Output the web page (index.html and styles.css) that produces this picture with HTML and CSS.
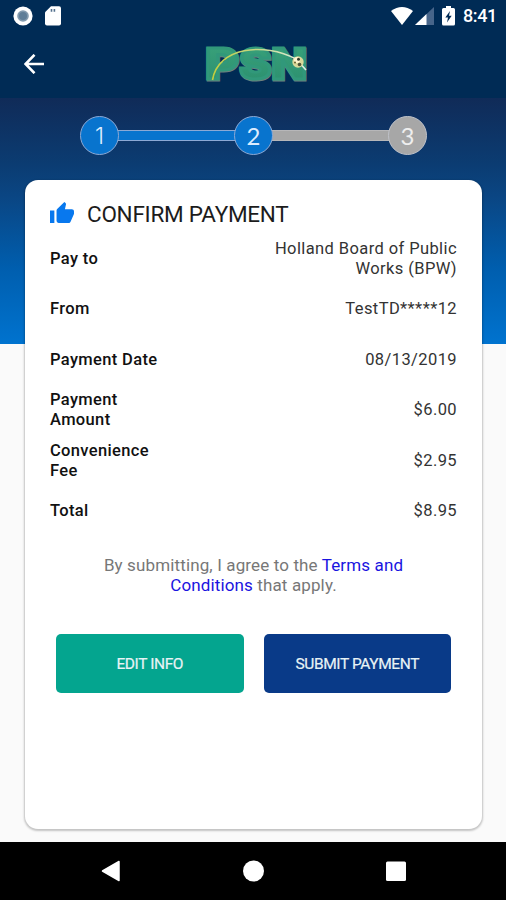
FILE: index.html
```html
<!DOCTYPE html>
<html lang="en">
<head>
<meta charset="utf-8">
<title>Confirm Payment</title>
<link rel="stylesheet" href="styles.css">
</head>
<body>
<div class="screen">
  <header class="top">
    <div class="status">
      <div class="status-left">
        <svg width="20" height="20" viewBox="0 0 20 20"><circle cx="10" cy="10" r="9.6" fill="#fff"/><circle cx="10" cy="10" r="5.8" fill="#829aae"/><circle cx="10" cy="10" r="4" fill="#5f7e98"/></svg>
        <svg width="16" height="20" viewBox="0 0 16 20"><path d="M6 .3H14Q16 .3 16 2.3V17.5Q16 19.5 14 19.5H2Q0 19.5 0 17.5V6.2Z" fill="#fff"/><path d="M5.700 3h1.600v2.800H5.700zM8.600 3h1.600v2.800H8.600z" fill="#53708d"/></svg>
      </div>
      <div class="status-right">
        <svg class="wifi" width="22" height="18" viewBox="0 0 22 18"><path d="M0 4Q11-4 22 4L11 18Z" fill="#fff"/></svg>
        <svg class="signal" width="19" height="18" viewBox="0 0 19 18"><path d="M0 18L19 0V18Z" fill="#47658a"/><path d="M0 18L11.500 7V18Z" fill="#fff"/></svg>
        <svg class="battery" width="13" height="20" viewBox="0 0 13 20"><path d="M4 0H9V2H11.500Q13 2 13 3.500V18Q13 19.500 11.500 19.500H1.500Q0 19.500 0 18V3.500Q0 2 1.500 2H4Z" fill="#fff"/><path d="M8 5L3.300 11.500H6L5 16.500L9.700 9.700H7Z" fill="#002b55"/></svg>
        <span class="clock">8:41</span>
      </div>
    </div>
    <div class="toolbar">
      <svg class="back" width="20" height="20" viewBox="0 0 20 20"><path d="M20 10H2M10.500 .8L1.500 10L10.500 19.200" fill="none" stroke="#fff" stroke-width="2.600"/></svg>
      <svg class="logo" width="104" height="40" viewBox="0 0 104 40">
        <defs>
          <linearGradient id="green" x1="0" y1="0" x2="0" y2="1"><stop offset="0" stop-color="#3ba47c"/><stop offset="1" stop-color="#2a8d6d"/></linearGradient>
          <linearGradient id="trail"><stop offset="0" stop-color="#c3cd3d"/><stop offset=".45" stop-color="#c5d884"/><stop offset="1" stop-color="#dfeee8"/></linearGradient>
        </defs>
        <g class="logo-text logo-edge">
          <text x="2" y="35.900" textLength="33" lengthAdjust="spacingAndGlyphs">P</text>
          <text x="35.800" y="35.900" textLength="32" lengthAdjust="spacingAndGlyphs">S</text>
          <text x="68" y="35.900" textLength="35" lengthAdjust="spacingAndGlyphs">N</text>
        </g>
        <g class="logo-text">
          <text x="1.500" y="35.300" textLength="33" lengthAdjust="spacingAndGlyphs">P</text>
          <text x="35.300" y="35.300" textLength="32" lengthAdjust="spacingAndGlyphs">S</text>
          <text x="67.500" y="35.300" textLength="35" lengthAdjust="spacingAndGlyphs">N</text>
        </g>
        <path d="M8.500 36C14 3 60-2 92 15L102 26" fill="none" stroke="url(#trail)" stroke-width="1.600"/>
        <circle cx="94" cy="18" r="5.700" fill="#d9d99a"/><circle cx="93" cy="16" r="3" fill="#fff5cf"/><circle cx="94.500" cy="15.300" r="1.500" fill="#333b2d"/><circle cx="95.500" cy="20.500" r="1.800" fill="#4e533a"/><circle cx="91" cy="18.500" r="1" fill="#695f2d"/>
      </svg>
    </div>
  </header>
  <main class="content">
    <div class="steps">
      <div class="step step-one">1</div>
      <div class="bar"></div>
      <div class="step">2</div>
      <div class="bar bar-off"></div>
      <div class="step step-off">3</div>
    </div>
    <section class="card">
      <h1 class="title">
        <svg width="24" height="22" viewBox="1 1 22 21" preserveAspectRatio="none"><path fill="#0878ee" d="M1 21h4V9H1v12zm22-11c0-1.100-.9-2-2-2h-6.310l.95-4.570.03-.32c0-.41-.17-.79-.44-1.060L14.170 1 7.590 7.590C7.220 7.950 7 8.450 7 9v10c0 1.100.9 2 2 2h9c.83 0 1.540-.5 1.840-1.220l3.020-7.050c.09-.23.14-.47.14-.73v-2z"/></svg>
        <span class="title-text">CONFIRM PAYMENT</span>
      </h1>
      <dl class="details">
        <div class="row"><dt>Pay to</dt><dd>Holland Board of Public<br>Works (BPW)</dd></div>
        <div class="row"><dt>From</dt><dd>TestTD*****12</dd></div>
        <div class="row"><dt>Payment Date</dt><dd>08/13/2019</dd></div>
        <div class="row"><dt>Payment<br>Amount</dt><dd>$6.00</dd></div>
        <div class="row"><dt>Convenience<br>Fee</dt><dd>$2.95</dd></div>
        <div class="row"><dt>Total</dt><dd>$8.95</dd></div>
      </dl>
      <p class="terms">By submitting, I agree to the <a>Terms and<br>Conditions</a> that apply.</p>
      <div class="actions">
        <button class="btn btn-edit">EDIT INFO</button>
        <button class="btn btn-submit">SUBMIT PAYMENT</button>
      </div>
    </section>
  </main>
  <nav class="navbar">
    <svg width="20" height="22" viewBox="0 0 20 22"><path d="M1.500 11L18 1.500V20.500Z" fill="#fff" stroke="#fff" stroke-width="1.500" stroke-linejoin="round"/></svg>
    <svg width="22" height="22" viewBox="0 0 22 22"><circle cx="10.500" cy="11" r="10.500" fill="#fff"/></svg>
    <svg width="20" height="22" viewBox="0 0 20 22"><rect y="1.500" width="20" height="19.500" rx="1.500" fill="#fff"/></svg>
  </nav>
</div>
</body>
</html>
```
FILE: styles.css
```css
* { box-sizing: border-box; }
body { margin: 0; font-family: Roboto, "Liberation Sans", sans-serif; color: #1c1c1c; }
svg { display: block; flex: none; }
.screen { width: 506px; height: 900px; display: flex; flex-direction: column; overflow: hidden; background: #fafafa; }
.top { height: 98px; background: #002b55; }
.status { height: 31px; padding: 0 9px 0 13px; display: flex; justify-content: space-between; align-items: center; }
.status-left { display: flex; gap: 12px; }
.status-right { display: flex; align-items: center; }
.wifi { margin-right: 1px; }
.signal { margin-left: 1px; }
.battery { margin-left: 8px; }
.clock { margin-left: 8px; color: #fff; font-size: 18px; font-weight: 500; line-height: 20px; width: 34px; white-space: nowrap; letter-spacing: -0.4px; }
.toolbar { height: 66px; padding: 0 24px; display: flex; align-items: center; }
.logo { margin-left: 160px; overflow: visible; }
.logo-text { font-family: Inter, sans-serif; font-size: 43px; font-weight: 900; fill: url(#green); stroke: #31987a; stroke-width: 3px; }
.logo-edge { fill: #6c817f; stroke: #6c817f; }
.content { height: 744px; padding: 18px 24px 12px 25px; background: linear-gradient(#102b58 0, #0b3c72 66px, #0a4684 100px, #005eae 170px, #0073cf 246px, #fafafa 246px); }
.steps { height: 39px; margin: 0 55px; display: flex; align-items: center; }
.step { width: 39px; height: 39px; flex: none; border: 1px solid #8ca9d5; border-radius: 50%; background: #0874ce; color: #dcecff; font: 400 24px/38px Lato, sans-serif; text-align: center; z-index: 1; }
.step-one { font-family: Inter, sans-serif; font-size: 23px; font-weight: 300; }
.step-off { background: #a7a7a7; border-color: #bfc2c9; color: #eee; }
.bar { flex: 1; height: 11px; margin: 0 -2px; background: #0874ce; border: solid #8ca9d5; border-width: 1.5px 0; }
.bar-off { background: #a7a7a7; border-color: #b7b7b9; }
.card { height: 649px; margin-top: 25px; padding: 20px 25px 0; background: #fff; border-radius: 13px; box-shadow: 0 1px 2px 1px rgba(0,0,0,.22); }
.title { margin: 0; height: 33px; display: flex; align-items: flex-start; gap: 13px; font-weight: 400; font-size: 22.500px; line-height: 28px; letter-spacing: -.25px; }
.title svg { margin-top: 2px; }
.details { margin: 0; font-size: 16.500px; line-height: 20px; padding-top: .5px; }
.row { height: 50.500px; display: flex; align-items: center; justify-content: space-between; }
dt { font-weight: 500; color: #111; letter-spacing: .35px; }
dd { margin: 0; text-align: right; color: #333; letter-spacing: .4px; }
.terms { margin: 18.500px 0 0; text-align: center; font-size: 17px; line-height: 20px; color: #777; letter-spacing: .13px; }
.terms a { color: #1a14e0; }
.actions { margin: 39px 6px 0; display: flex; gap: 20px; }
.btn { flex: 1; height: 59px; border: 0; border-radius: 5px; padding: 0; color: #e8f3f5; font: 400 15.500px Roboto, sans-serif; letter-spacing: -.4px; -webkit-text-stroke: .2px currentColor; }
.btn-edit { background: #04a58f; }
.btn-submit { background: #093a88; }
.navbar { height: 58px; background: #000; display: flex; justify-content: space-between; padding: 18px 100px 0 101px; }
```
